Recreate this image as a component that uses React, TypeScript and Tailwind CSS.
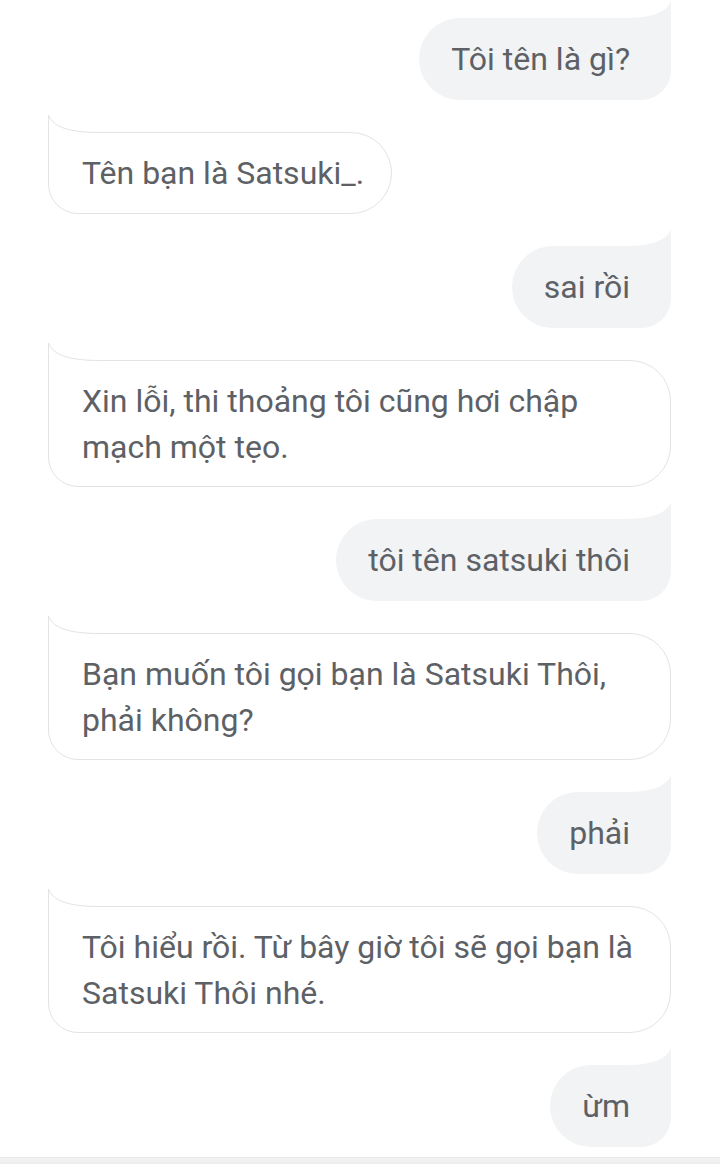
import React from 'react';

type Message = {
  from: 'me' | 'bot';
  text: string;
};

const messages: Message[] = [
  { from: 'me', text: 'Tôi tên là gì?' },
  { from: 'bot', text: 'Tên bạn là Satsuki_.' },
  { from: 'me', text: 'sai rồi' },
  { from: 'bot', text: 'Xin lỗi, thi thoảng tôi cũng hơi chập mạch một tẹo.' },
  { from: 'me', text: 'tôi tên satsuki thôi' },
  { from: 'bot', text: 'Bạn muốn tôi gọi bạn là Satsuki Thôi, phải không?' },
  { from: 'me', text: 'phải' },
  { from: 'bot', text: 'Tôi hiểu rồi. Từ bây giờ tôi sẽ gọi bạn là Satsuki Thôi nhé.' },
  { from: 'me', text: 'ừm' },
];

// Tail that sweeps up from the top-right corner of my bubbles
const MyTail = () => (
  <svg
    className="absolute right-0 top-[-17px]"
    width="46"
    height="18"
    viewBox="0 0 46 18"
  >
    <path d="M46 0 C 41 12, 26 17, 0 17 L0 18 L46 18 Z" fill="#f1f3f4" />
  </svg>
);

// Tail on the top-left corner of the bot's bubbles, with its outline
const BotTail = () => (
  <svg
    className="absolute left-[-1px] top-[-18px]"
    width="52"
    height="21"
    viewBox="0 0 52 21"
  >
    <path d="M0.5 0 C 5 12, 21 17.5, 52 17.5 L52 21 L0.5 21 Z" fill="#ffffff" />
    <path
      d="M0.5 21 L0.5 0 C 5 12, 21 17.5, 52 17.5"
      fill="none"
      stroke="#e2e3e5"
      strokeWidth="1"
    />
  </svg>
);

const Bubble: React.FC<{ message: Message }> = ({ message }) => {
  if (message.from === 'me') {
    return (
      <div className="flex justify-end">
        <div className="relative bg-[#f1f3f4] rounded-l-[41px] rounded-br-[30px] rounded-tr-none pl-[32px] pr-[41px] py-[18.5px] max-w-[623px]">
          <MyTail />
          <p className="leading-[45px] whitespace-nowrap">{message.text}</p>
        </div>
      </div>
    );
  }

  return (
    <div className="flex justify-start">
      <div className="relative flex items-center min-h-[82px] bg-white border border-[#e2e3e5] rounded-r-[41px] rounded-bl-[30px] rounded-tl-none pl-[33px] pr-[27px] py-[16.5px] max-w-[623px]">
        <BotTail />
        <p className="leading-[46px]">{message.text}</p>
      </div>
    </div>
  );
};

export default function App() {
  return (
    <div
      className="h-[1164px] w-[720px] bg-white flex flex-col overflow-hidden text-[32px] text-[#5d6166]"
      style={{ fontFamily: 'Roboto, "Noto Sans", sans-serif' }}
    >
      <div className="flex-1 flex flex-col gap-8 pt-[18px] pl-[48px] pr-[49px]">
        {messages.map((m, i) => (
          <Bubble key={i} message={m} />
        ))}
      </div>
      <div className="h-[7px] bg-gradient-to-b from-[#f4f4f4] to-[#ececec] border-t border-[#e8e8e8]" />
    </div>
  );
}
